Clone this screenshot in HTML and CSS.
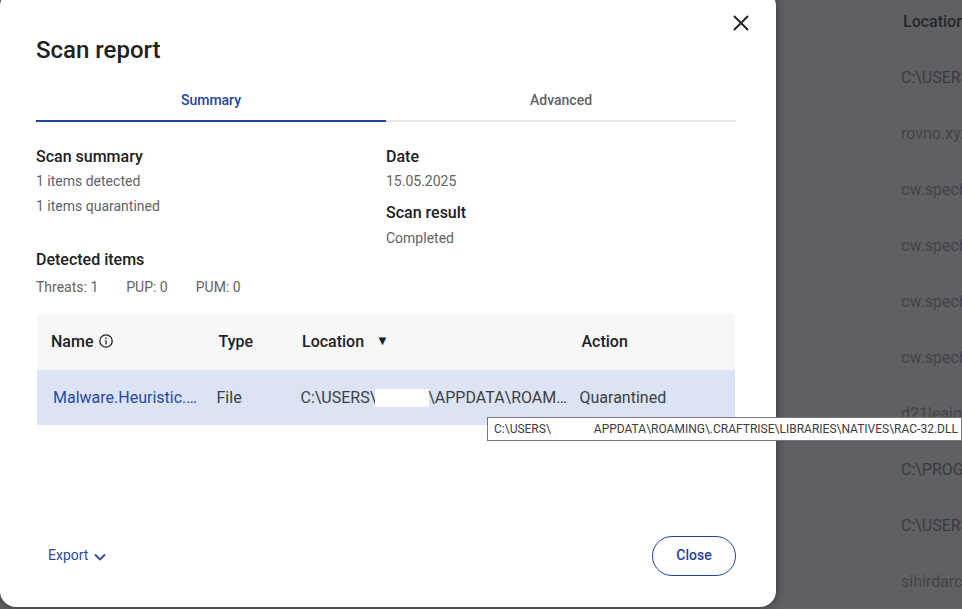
FILE: index.html
```html
<!DOCTYPE html>
<html lang="en">
<head>
    <meta charset="UTF-8">
    <meta name="viewport" content="width=device-width, initial-scale=1.0">
    <title>Scan report</title>
    <link rel="stylesheet" href="styles.css">
</head>
<body>

    <!-- Page behind the dialog, dimmed -->
    <div class="backdrop">
        <div class="back-head">Location</div>
        <div class="back-row back-row-dark">C:\USERS\</div>
        <div class="back-row">rovno.xyz</div>
        <div class="back-row">cw.spech</div>
        <div class="back-row">cw.spech</div>
        <div class="back-row">cw.spech</div>
        <div class="back-row">cw.spech</div>
        <div class="back-row">d21leaig</div>
        <div class="back-row back-row-dark">C:\PROGRAM</div>
        <div class="back-row back-row-dark">C:\USERS\</div>
        <div class="back-row">sihirdarc</div>
    </div>

    <div class="modal">
        <button class="close-x" type="button" aria-label="Close">
            <svg width="16" height="16" viewBox="0 0 16 16"><path d="M1 1L15 15M15 1L1 15" stroke="#202124" stroke-width="1.9" fill="none"/></svg>
        </button>

        <h1 class="modal-title">Scan report</h1>

        <div class="tabs">
            <div class="tab tab-active">Summary</div>
            <div class="tab">Advanced</div>
        </div>

        <div class="summary">
            <div class="summary-col">
                <div class="label">Scan summary</div>
                <div class="value">1 items detected</div>
                <div class="value">1 items quarantined</div>
            </div>
            <div class="summary-col">
                <div class="label">Date</div>
                <div class="value">15.05.2025</div>
                <div class="label label-next">Scan result</div>
                <div class="value">Completed</div>
            </div>
        </div>

        <div class="detected">
            <div class="label">Detected items</div>
            <div class="counts">
                <span>Threats: 1</span>
                <span>PUP: 0</span>
                <span>PUM: 0</span>
            </div>
        </div>

        <div class="table">
            <div class="table-row table-head">
                <div class="col-name">Name
                    <svg class="info" width="14" height="14" viewBox="0 0 14 14"><circle cx="7" cy="7" r="6.2" stroke="#202124" stroke-width="1.3" fill="none"/><path d="M7 6.2V10.4M7 3.6V5" stroke="#202124" stroke-width="1.3" fill="none"/></svg>
                </div>
                <div class="col-type">Type</div>
                <div class="col-location">Location <span class="sort">&#9660;</span></div>
                <div class="col-action">Action</div>
            </div>
            <div class="table-row table-item">
                <div class="col-name"><span class="clip">Malware.Heuristic.1000</span></div>
                <div class="col-type">File</div>
                <div class="col-location"><span class="clip">C:\USERS\<span class="redact"></span>\APPDATA\ROAMING\.CRAFTRISE\LIBRARIES</span></div>
                <div class="col-action">Quarantined</div>
            </div>
        </div>

        <div class="modal-foot">
            <a class="export" href="#">Export
                <svg width="12" height="8" viewBox="0 0 12 8"><path d="M1 1.5L6 6.5L11 1.5" stroke="#2a4a9c" stroke-width="1.8" fill="none"/></svg>
            </a>
            <button class="close-btn" type="button">Close</button>
        </div>
    </div>

    <div class="tooltip">C:\USERS\<span class="tooltip-gap"></span>APPDATA\ROAMING\.CRAFTRISE\LIBRARIES\NATIVES\RAC-32.DLL</div>

</body>
</html>
```

FILE: styles.css
```css
/* Reset default margin and padding */
* {
    margin: 0;
    padding: 0;
    box-sizing: border-box;
}

body {
    background-color: #5f6064;
    font-family: Roboto, "Liberation Sans", sans-serif;
    height: 609px;
    overflow: hidden;
    position: relative;
}

/* Dimmed page behind the dialog */
.backdrop {
    padding-left: 783px;
    color: #434448;
    font-size: 16px;
    white-space: nowrap;
}

.back-head {
    height: 49px;
    padding: 12px 0 0 120px;
    font-weight: 500;
    color: #26272a;
    border-bottom: 1px solid #636468;
}

.back-row {
    height: 56px;
    padding: 19px 0 0 118px;
    border-bottom: 1px solid #636468;
}

.back-row-dark {
    color: #3a3b3f;
}

.modal {
    position: absolute;
    left: 0;
    top: -10px;
    width: 776px;
    height: 617px;
    padding: 0 40px 0 36px;
    background-color: #fff;
    border-radius: 16px;
    box-shadow: 0 0 10px rgba(0, 0, 0, 0.45);
}

.close-x {
    position: absolute;
    top: 25px;
    right: 27px;
    width: 16px;
    height: 16px;
    background: none;
    border: none;
    display: flex;
}

.modal-title {
    padding-top: 44px;
    font-size: 24px;
    line-height: 32px;
    font-weight: 500;
    color: #202124;
}

.tabs {
    display: flex;
    margin-top: 14px;
}

.tab {
    width: 350px;
    height: 42px;
    padding-top: 11px;
    text-align: center;
    font-size: 14px;
    line-height: 18px;
    font-weight: 500;
    color: #5f6368;
    border-bottom: 2px solid #e6e6e6;
}

.tab-active {
    color: #1f459f;
    border-bottom-color: #1f459f;
}

.summary {
    display: flex;
    margin-top: 24px;
}

.summary-col {
    width: 350px;
}

.label {
    font-size: 16px;
    line-height: 22px;
    font-weight: 500;
    color: #202124;
}

.label-next {
    margin-top: 10px;
}

.value {
    margin-top: 3px;
    font-size: 14px;
    line-height: 22px;
    color: #5f6368;
}

.label + .value {
    margin-top: 2px;
}

.label-next + .value {
    margin-top: 3px;
}

.detected {
    margin-top: 0;
}

.counts {
    display: flex;
    gap: 28px;
    margin-top: 5px;
    font-size: 14px;
    line-height: 22px;
    color: #5f6368;
}

.table {
    margin-top: 16px;
    margin-left: 1px;
    width: 698px;
}

.table-row {
    display: flex;
    align-items: center;
    height: 56px;
    font-size: 16px;
}

.table-item {
    height: 55px;
    background-color: #dce3f5;
    color: #3c4043;
}

.table-head {
    padding-bottom: 2px;
    background-color: #f7f7f7;
    font-weight: 500;
    color: #202124;
}

.table-head .col-name {
    padding-left: 14px;
}

.table-item .col-name {
    padding-left: 16px;
    color: #2549a5;
}

.col-name {
    width: 179.5px;
    display: flex;
    align-items: center;
    gap: 6px;
}

.col-type {
    width: 84px;
}

.table-head .col-type {
    padding-left: 2px;
}

.col-location {
    width: 279px;
}

.table-head .col-location {
    padding-left: 1.5px;
}

.table-head .col-action {
    padding-left: 2px;
}

.clip {
    display: block;
    width: 100%;
    overflow: hidden;
    white-space: nowrap;
    text-overflow: ellipsis;
}

.table-item .col-name .clip {
    width: 144px;
}

.table-item .col-location .clip {
    width: 267px;
}

.redact {
    display: inline-block;
    width: 54px;
    height: 18px;
    margin-left: -1px;
    margin-right: -1px;
    background-color: #fff;
    vertical-align: -4px;
}

.sort {
    margin-left: 8px;
    font-size: 13px;
    vertical-align: 2px;
}

.modal-foot {
    display: flex;
    justify-content: space-between;
    align-items: center;
    margin-top: 111px;
    padding-left: 12px;
}

.export {
    display: flex;
    align-items: center;
    gap: 6px;
    padding-bottom: 2px;
    font-size: 14px;
    color: #2a4a9c;
    text-decoration: none;
}

.export svg {
    margin-top: 4px;
}

.close-btn {
    width: 84px;
    height: 40px;
    padding-bottom: 2px;
    background-color: #fff;
    border: 1px solid #1f459f;
    border-radius: 20px;
    font-family: inherit;
    font-size: 14px;
    font-weight: 500;
    color: #1f459f;
}

/* Native title tooltip over the path cell */
.tooltip {
    position: absolute;
    left: 487px;
    top: 417px;
    width: 475px;
    height: 24px;
    padding-left: 6px;
    background-color: #fff;
    border: 1px solid #767676;
    font-size: 12px;
    line-height: 22px;
    color: #3c3c3c;
    white-space: nowrap;
    overflow: hidden;
}

.tooltip-gap {
    display: inline-block;
    width: 43px;
}
```
